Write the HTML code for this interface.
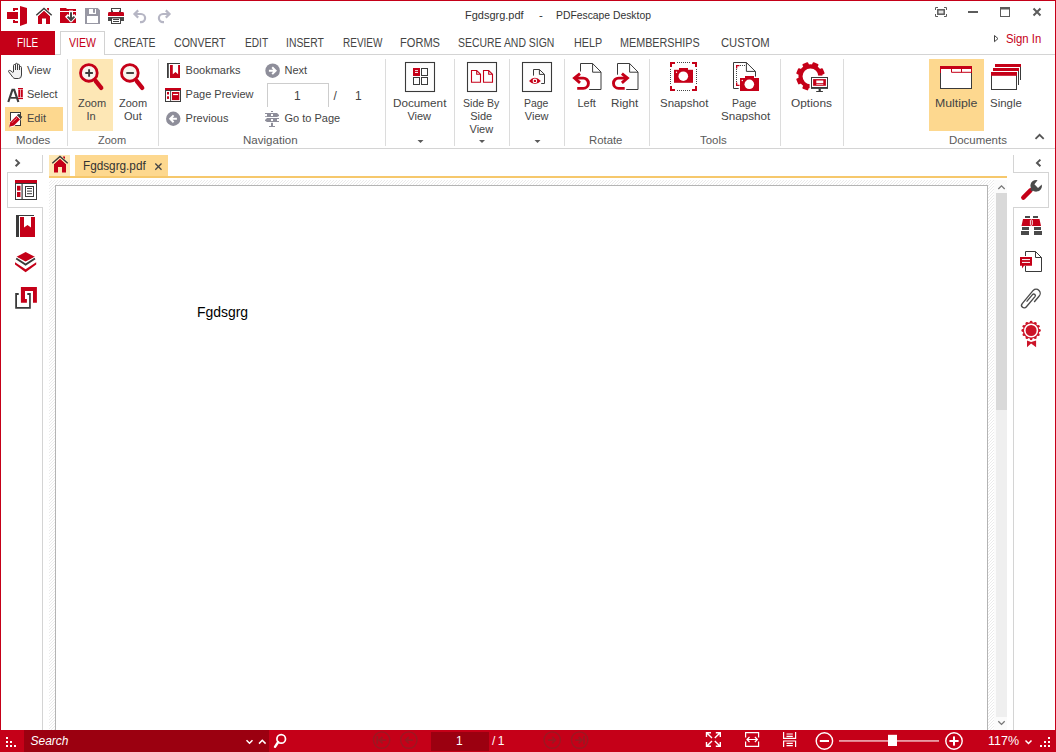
<!DOCTYPE html>
<html><head><meta charset="utf-8">
<style>
*{margin:0;padding:0;box-sizing:border-box}
html,body{width:1056px;height:752px;overflow:hidden;background:#fff}
body{position:relative;font-family:"Liberation Sans",sans-serif;color:#444}
.a{position:absolute}
.t{position:absolute;white-space:nowrap;line-height:1;font-size:11px;color:#444;transform-origin:0 0}
.tb{font-size:12.5px;color:#444}
.gl{color:#5a5a5a}
.vl{position:absolute;width:1px;background:#dcdcdc}
.hl{position:absolute;height:1px;background:#d4d4d4}
svg{position:absolute;overflow:visible}
</style></head><body>
<!-- window border -->
<div class="a" style="left:0;top:0;width:1056px;height:1px;background:#c50018"></div>
<div class="a" style="left:0;top:0;width:1px;height:730px;background:#c50018"></div>
<div class="a" style="left:1055px;top:0;width:1px;height:730px;background:#c50018"></div>

<!-- title -->
<div class="t" style="left:465px;top:9.8px;font-size:11.5px;color:#333;transform:scaleX(0.955)">Fgdsgrg.pdf</div>
<div class="t" style="left:539px;top:9.8px;font-size:11.5px;color:#333">-</div>
<div class="t" style="left:556px;top:9.8px;font-size:11.5px;color:#333;transform:scaleX(0.9)">PDFescape Desktop</div>

<!-- tab row -->
<div class="hl" style="left:55px;top:54px;width:1000px;background:#d4d4d4"></div>
<div class="a" style="left:1px;top:31px;width:54px;height:24px;background:#c50018"></div>
<div class="a" style="left:60px;top:31px;width:45px;height:24px;border:1px solid #d2d2d2;border-bottom:none;background:#fff"></div>
<div class="t tb" style="left:16.5px;top:37px;color:#fff;transform:scaleX(0.8)">FILE</div>
<div class="t tb" style="left:69px;top:37px;color:#c50018;transform:scaleX(0.84)">VIEW</div>
<div class="t tb" style="left:114px;top:37px;transform:scaleX(0.835)">CREATE</div>
<div class="t tb" style="left:174px;top:37px;transform:scaleX(0.846)">CONVERT</div>
<div class="t tb" style="left:244.5px;top:37px;transform:scaleX(0.81)">EDIT</div>
<div class="t tb" style="left:285.8px;top:37px;transform:scaleX(0.83)">INSERT</div>
<div class="t tb" style="left:342.6px;top:37px;transform:scaleX(0.80)">REVIEW</div>
<div class="t tb" style="left:400.3px;top:37px;transform:scaleX(0.886)">FORMS</div>
<div class="t tb" style="left:458px;top:37px;transform:scaleX(0.836)">SECURE AND SIGN</div>
<div class="t tb" style="left:573.7px;top:37px;transform:scaleX(0.86)">HELP</div>
<div class="t tb" style="left:619.5px;top:37px;transform:scaleX(0.863)">MEMBERSHIPS</div>
<div class="t tb" style="left:721.4px;top:37px;transform:scaleX(0.90)">CUSTOM</div>
<div class="t" style="left:1006px;top:31.8px;font-size:13px;color:#c50018;transform:scaleX(0.87)">Sign In</div>

<!-- ribbon -->
<div class="hl" style="left:1px;top:148px;width:1054px;background:#d4d4d4"></div>
<div class="a" style="left:5px;top:107px;width:58px;height:24px;background:#fdd88f"></div>
<div class="a" style="left:72px;top:59px;width:41px;height:72px;background:#fde7b5"></div>
<div class="a" style="left:929px;top:59px;width:55px;height:72px;background:#fdd88f"></div>
<div class="vl" style="left:67px;top:59px;height:87px"></div>
<div class="vl" style="left:158px;top:59px;height:87px"></div>
<div class="vl" style="left:385px;top:59px;height:87px"></div>
<div class="vl" style="left:454px;top:59px;height:87px"></div>
<div class="vl" style="left:509px;top:59px;height:87px"></div>
<div class="vl" style="left:564px;top:59px;height:87px"></div>
<div class="vl" style="left:649px;top:59px;height:87px"></div>
<div class="vl" style="left:780px;top:59px;height:87px"></div>
<div class="vl" style="left:843px;top:59px;height:87px"></div>

<!-- ribbon texts -->
<div class="t" style="left:27px;top:64.5px">View</div>
<div class="t" style="left:27px;top:88.7px">Select</div>
<div class="t" style="left:27px;top:112.5px">Edit</div>
<div class="t gl" style="left:15.8px;top:134.8px;transform:scaleX(1.04)">Modes</div>
<div class="t" style="left:78px;top:97.8px">Zoom</div>
<div class="t" style="left:86.5px;top:110.8px">In</div>
<div class="t" style="left:119px;top:97.8px">Zoom</div>
<div class="t" style="left:124px;top:110.8px">Out</div>
<div class="t gl" style="left:98px;top:134.8px">Zoom</div>
<div class="t" style="left:185.6px;top:64.5px">Bookmarks</div>
<div class="t" style="left:185.6px;top:88.7px">Page Preview</div>
<div class="t" style="left:185.6px;top:112.5px">Previous</div>
<div class="t" style="left:284.5px;top:64.5px">Next</div>
<div class="t" style="left:284.5px;top:112.7px">Go to Page</div>
<div class="t gl" style="left:243px;top:134.8px;transform:scaleX(1.05)">Navigation</div>
<div class="a" style="left:267px;top:83px;width:62px;height:24px;border:1px solid #cdcdcd;border-bottom:none"></div>
<div class="t" style="left:294px;top:90px;font-size:12px">1</div>
<div class="t" style="left:333.5px;top:90px;font-size:12px">/</div>
<div class="t" style="left:355px;top:90px;font-size:12px">1</div>
<div class="t" style="left:392.6px;top:97.8px;transform:scaleX(1.065)">Document</div>
<div class="t" style="left:407.4px;top:110.8px">View</div>
<div class="t" style="left:463.4px;top:97.8px;transform:scaleX(0.96)">Side By</div>
<div class="t" style="left:470.2px;top:110.8px">Side</div>
<div class="t" style="left:469.5px;top:124px">View</div>
<div class="t" style="left:524px;top:97.8px;transform:scaleX(0.95)">Page</div>
<div class="t" style="left:524.8px;top:110.8px">View</div>
<div class="t" style="left:577.5px;top:97.8px">Left</div>
<div class="t" style="left:611.2px;top:97.8px;transform:scaleX(1.06)">Right</div>
<div class="t gl" style="left:589px;top:134.8px;transform:scaleX(1.03)">Rotate</div>
<div class="t" style="left:660.3px;top:97.8px;transform:scaleX(1.04)">Snapshot</div>
<div class="t" style="left:732.3px;top:97.8px;transform:scaleX(0.95)">Page</div>
<div class="t" style="left:720.6px;top:110.8px;transform:scaleX(1.06)">Snapshot</div>
<div class="t gl" style="left:700px;top:134.8px;transform:scaleX(1.04)">Tools</div>
<div class="t" style="left:790.7px;top:97.8px;transform:scaleX(1.08)">Options</div>
<div class="t" style="left:935.3px;top:97.8px;transform:scaleX(1.12)">Multiple</div>
<div class="t" style="left:989.8px;top:97.8px;transform:scaleX(1.04)">Single</div>
<div class="t gl" style="left:949px;top:134.8px;transform:scaleX(1.04)">Documents</div>

<!-- sidebars -->
<div class="vl" style="left:42px;top:155px;height:18px;background:#d4d4d4"></div>
<div class="hl" style="left:7px;top:172px;width:36px"></div>
<div class="vl" style="left:7px;top:172px;height:36px;background:#d4d4d4"></div>
<div class="hl" style="left:7px;top:207px;width:36px"></div>
<div class="vl" style="left:42px;top:207px;height:523px;background:#d4d4d4"></div>

<div class="vl" style="left:1013px;top:155px;height:18px;background:#d4d4d4"></div>
<div class="hl" style="left:1013px;top:172px;width:36px"></div>
<div class="vl" style="left:1048px;top:172px;height:36px;background:#d4d4d4"></div>
<div class="hl" style="left:1013px;top:207px;width:36px"></div>
<div class="vl" style="left:1013px;top:207px;height:523px;background:#d4d4d4"></div>

<!-- doc tabs -->
<div class="a" style="left:49px;top:155px;width:21px;height:22px;background:#fde7b5"></div>
<div class="a" style="left:75px;top:155px;width:93px;height:22px;background:#fdd88f"></div>
<div class="a" style="left:49px;top:176px;width:958px;height:2px;background:#f6c86c"></div>
<div class="t" style="left:83.3px;top:160.2px;font-size:12.5px;color:#333;transform:scaleX(0.94)">Fgdsgrg.pdf</div>

<!-- document area -->
<svg width="0" height="0"><defs>
<pattern id="hatch" width="3" height="3" patternUnits="userSpaceOnUse" patternTransform="rotate(45)">
<rect width="3" height="3" fill="#fff"/><rect width="1" height="3" fill="#e6e6e6"/></pattern></defs></svg>
<div class="a" style="left:49px;top:180px;width:946px;height:550px;background:repeating-linear-gradient(135deg,#ebebeb 0px,#ebebeb 0.7px,#fff 0.7px,#fff 2.121px)"></div>
<div class="a" style="left:55px;top:185px;width:933px;height:560px;background:#fff;border:1px solid #b4b4b4"></div>
<div class="t" style="left:196.8px;top:304.6px;font-size:14px;color:#000;transform:scaleX(0.995)">Fgdsgrg</div>

<!-- scrollbar -->
<div class="a" style="left:994px;top:180px;width:13px;height:550px;background:#fbfbfb"></div>
<div class="a" style="left:996px;top:193px;width:11px;height:217px;background:#d9d9d9"></div>
<div class="a" style="left:996px;top:410px;width:11px;height:307px;background:#efefef"></div>

<!-- status bar -->
<div class="a" style="left:0;top:730px;width:1056px;height:22px;background:#c50018"></div>
<div class="a" style="left:24px;top:730px;width:245px;height:22px;background:#9b0010"></div>
<div class="a" style="left:431px;top:732px;width:58px;height:19px;background:#9b0010"></div>
<div class="t" style="left:30.5px;top:734.7px;font-size:12px;font-style:italic;color:#fff">Search</div>
<div class="t" style="left:456px;top:734.8px;font-size:12px;color:#fff">1</div>
<div class="t" style="left:492px;top:734.8px;font-size:12px;color:#fff;letter-spacing:2.5px">/1</div>
<div class="t" style="left:987.5px;top:734.6px;font-size:12px;color:#fff;transform:scaleX(1.04)">117%</div>


<svg class="a" style="left:0;top:0" width="1056" height="752" viewBox="0 0 1056 752" shape-rendering="geometricPrecision">
<!-- ===== title bar ===== -->
<g fill="#c50018">
<rect x="7" y="12" width="11" height="7"/>
<rect x="13" y="8" width="5" height="2"/><rect x="13" y="8" width="2" height="3"/>
<rect x="13" y="21" width="5" height="2"/><rect x="13" y="20" width="2" height="3"/>
<path d="M20 6L27 8V23.5L20 26Z"/>
</g>
<!-- home -->
<path d="M38 16L44 10.6L50 16V24H46V18.6H42V24H38Z" fill="#c50018"/>
<path d="M47 8H49V11L47 10Z" fill="#c50018"/>
<path d="M36.3 15.6L44 8.6L51.7 15.6" fill="none" stroke="#fff" stroke-width="3"/>
<path d="M36.3 15.3L44 8.4L51.7 15.3" fill="none" stroke="#3a3a3a" stroke-width="1.4"/>
<!-- folder -->
<path d="M60 8H66L67 9H76V11H60Z" fill="#c50018"/>
<rect x="60" y="12" width="16" height="11" fill="#c50018"/>
<path d="M71 12.5V19.5M67.8 16.8L71 20L74.2 16.8" fill="none" stroke="#fff" stroke-width="4" stroke-linecap="square"/>
<path d="M71 12.3V19.5M67.6 16.6L71 20L74.4 16.6" fill="none" stroke="#454545" stroke-width="2"/>
<!-- save -->
<path d="M85 8H97.7L100 10.2V24H85Z" fill="#9898a4"/>
<rect x="89" y="9" width="7" height="5" fill="#fff"/><rect x="93" y="9" width="2" height="3.8" fill="#9898a4"/>
<rect x="87" y="16" width="11" height="7" fill="#fff"/>
<!-- printer -->
<rect x="111.5" y="8.5" width="9" height="4.5" fill="#fff" stroke="#444" stroke-width="1"/>
<path d="M108 13.2Q108 12 109.5 12H122.5Q124 12 124 13.2V16H108Z" fill="#c50018"/>
<rect x="108" y="17" width="16" height="4" fill="#4a4a4a"/>
<rect x="111.5" y="18" width="9" height="5.5" fill="#fff" stroke="#444" stroke-width="1"/>
<rect x="113" y="19" width="6" height="1" fill="#444"/><rect x="113" y="21" width="6" height="1" fill="#444"/><rect x="111" y="10.5" width="2" height="1.6" fill="#444"/><rect x="119" y="10.5" width="2" height="1.6" fill="#444"/>
<!-- undo / redo -->
<g fill="none" stroke="#b6b6c4" stroke-width="2.2">
<path d="M138.2 10.4L134.5 14L138.2 17.6"/><path d="M135 14H141A4.1 4.1 0 0 1 141 22.2H140"/>
<path d="M165.8 10.4L169.5 14L165.8 17.6"/><path d="M169 14H163A4.1 4.1 0 0 0 163 22.2H164"/>
</g>
<!-- window controls -->
<g fill="none" stroke="#5c5c5c" stroke-width="1">
<path d="M935.5 10V7.5H938M944 7.5H946.5V10M946.5 14V16.5H944M938 16.5H935.5V14"/>
<rect x="937.8" y="9.8" width="6.4" height="4.4" fill="#e4e4e4" stroke-width="1.5"/>
<rect x="1000.5" y="7.5" width="9" height="9"/>
</g>
<rect x="968" y="11" width="10" height="2" fill="#5c5c5c"/>
<rect x="1000" y="7" width="10" height="2.5" fill="#5c5c5c"/>
<path d="M1033.5 8.5L1040.5 15.5M1040.5 8.5L1033.5 15.5" stroke="#5c5c5c" stroke-width="2"/>
<!-- sign in triangle -->
<path d="M994.5 35.5L998 38.6L994.5 41.7Z" fill="none" stroke="#444" stroke-width="1"/>

<!-- ===== ribbon ===== -->
<!-- hand -->
<path d="M13.5 72V65.5Q13.5 64.5 14.5 64.5Q15.5 64.5 15.5 65.5V64.2Q15.5 63.3 16.5 63.3Q17.5 63.3 17.5 64.2V64.8Q17.5 64.3 18.5 64.3Q19.5 64.3 19.5 65.3V67.2Q19.7 66.5 20.5 66.5Q21.5 66.5 21.5 67.5V75Q21.5 78.5 18.5 78.5H15Q13.8 78.5 12.8 77.2L8.5 71.5Q8.3 70.4 9.6 70.4Q10.8 70.4 12.4 72.2Q13 72.9 13.5 72Z" fill="#f2f2f2" stroke="#3c3c3c" stroke-width="1"/>
<path d="M15.5 65V70M17.5 64.5V70M19.5 65.5V70" stroke="#3c3c3c" stroke-width="1" fill="none"/>
<!-- select A -->
<path d="M8.3 102L12.4 89.8H14.2L18.4 102" fill="none" stroke="#3c3c3c" stroke-width="2.1"/>
<rect x="10.5" y="97" width="5.8" height="1.7" fill="#3c3c3c"/>
<g fill="#c50018"><rect x="18" y="88" width="5" height="1.2"/><rect x="18" y="97.8" width="5" height="1.3"/>
<rect x="18.3" y="89.6" width="1.9" height="7.6"/><rect x="20.8" y="89.6" width="2" height="7.6"/></g>
<!-- edit -->
<rect x="10.5" y="112.5" width="10" height="13" fill="#fff" stroke="#3a3a3a" stroke-width="1"/>
<path d="M16.2 115.2L20.8 119.8L14 126.6L9.6 127.4L9.6 121.8Z" fill="#fff"/>
<path d="M16.5 116L20 119.5L14 125.6L9.2 126.8L10.3 122.2Z" fill="#c50018"/>
<path d="M12.4 122.4L16.8 118" stroke="#fff" stroke-width="0.9" stroke-dasharray="0.9 0.9"/>
<path d="M17.3 115.1L19 114.2L21.8 116.9L20.6 118.4Z" fill="#3a3a3a" stroke="#3a3a3a" stroke-width="0.8"/>
<path d="M8.9 126.5L9.4 127.2L10 127.6" stroke="#fdd88f" stroke-width="0.1"/>
<!-- zoom in / out -->
<g fill="#f8f5ef" stroke="#c50018" stroke-width="2.8">
<circle cx="88.85" cy="72.9" r="8.35"/><circle cx="129.85" cy="72.9" r="8.35"/></g>
<g stroke="#c50018" stroke-width="4.4" stroke-linecap="round">
<path d="M95.8 81.2L101.2 87.8"/><path d="M136.8 81.2L142.2 87.8"/></g>
<path d="M85.3 73H92.9M89.1 69.3V76.7" stroke="#3c3c3c" stroke-width="1.9"/>
<path d="M126.3 73H133.9" stroke="#3c3c3c" stroke-width="1.9"/>
<!-- bookmarks -->
<rect x="167" y="63" width="13" height="1" fill="#3c3c3c"/><rect x="167" y="63" width="1.8" height="15" fill="#3c3c3c"/>
<path d="M170 65H180V78H170Z" fill="#c50018"/>
<path d="M172.8 65H178.1V74.3L175.5 72L172.8 74.3Z" fill="#fff"/>
<!-- page preview -->
<rect x="165" y="88" width="16" height="3" fill="#c50018"/>
<rect x="165.5" y="90.5" width="15" height="11" fill="#fff" stroke="#3c3c3c" stroke-width="1"/>
<rect x="170.2" y="91" width="0.9" height="10.5" fill="#3c3c3c"/>
<rect x="167" y="92" width="2" height="2.5" fill="#c50018"/><rect x="167" y="96.3" width="2" height="2.6" fill="#c50018"/>
<rect x="172" y="92" width="7.3" height="8.1" fill="#c50018"/><rect x="173.1" y="93.9" width="5" height="1.2" fill="#fff"/>
<!-- previous / next -->
<circle cx="173.25" cy="118.75" r="7.2" fill="#8e8e9a"/>
<path d="M176.9 118.8H170.2M173.6 115.4L170.2 118.8L173.6 122.2" fill="none" stroke="#fff" stroke-width="2"/>
<circle cx="272.6" cy="70.7" r="7.3" fill="#8e8e9a"/>
<path d="M268.9 70.7H275.6M272.2 67.3L275.6 70.7L272.2 74.1" fill="none" stroke="#fff" stroke-width="2"/>
<!-- go to page -->
<g fill="#8e8e9a">
<rect x="271" y="111" width="2" height="1"/>
<path d="M265 113H277L279 115V116L277 117H265V116.2H267V114H265Z"/>
<path d="M279 118H267L265 120V120.8L267 122H279V121H277V119H279Z"/>
<rect x="271" y="122.8" width="2" height="3.5"/><rect x="269" y="126" width="6" height="1"/>
</g>
<rect x="271" y="114" width="2" height="2" fill="#fff"/><rect x="271" y="119" width="2" height="2" fill="#fff"/>
<!-- dropdown arrows -->
<g fill="#5a5a5a"><path d="M417.5 140H423.5L420.5 143Z"/><path d="M479 140H485L482 143Z"/><path d="M534.5 140H540.5L537.5 143Z"/></g>
<!-- document view -->
<g fill="#fdfdfd" stroke="#3a3a3a" stroke-width="1.1">
<rect x="405.5" y="62.5" width="29" height="29"/><rect x="467.5" y="62.5" width="29" height="29"/><rect x="522.5" y="62.5" width="29" height="29"/></g>
<rect x="413" y="68" width="7" height="8" fill="#c50018"/>
<rect x="415" y="70.2" width="3" height="0.9" fill="#fff"/><rect x="415" y="72" width="3" height="0.9" fill="#fff"/>
<g fill="none" stroke="#3a3a3a" stroke-width="1">
<rect x="421.5" y="68.5" width="6" height="7"/><rect x="413.5" y="77.5" width="6" height="7"/><rect x="421.5" y="77.5" width="6" height="7"/></g>
<!-- side by side -->
<g fill="none" stroke="#c50018" stroke-width="1.1">
<path d="M471.5 70.5H476.7L480.5 74.2V82.3H471.5Z M476.7 70.5V74.2H480.5"/>
<path d="M483.5 70.5H488.7L492.5 74.2V82.3H483.5Z M488.7 70.5V74.2H492.5"/></g>
<!-- page view -->
<path d="M533.5 75.6V69.5H539.4L544.5 74.4V83.5H541.2 M539.4 69.5V74.4H544.5" fill="none" stroke="#3a3a3a" stroke-width="1"/>
<path d="M529 80.9Q534.9 74.6 540.8 80.9Q534.9 87.2 529 80.9Z" fill="#c50018"/>
<circle cx="534.9" cy="80.9" r="2.3" fill="#fff"/><circle cx="534.9" cy="80.9" r="1.2" fill="#c50018"/>
<!-- rotate left / right -->
<g fill="none" stroke="#3a3a3a" stroke-width="1">
<path d="M580.5 71.5V63.5H592.6L601 72V89.5H589.2 M592.6 63.5V72.2H601"/>
<path d="M617.5 74.7V63.5H629.6L638 72V89.5H626.2 M629.6 63.5V72.2H638"/></g>
<g fill="none" stroke="#c50018" stroke-width="2.9">
<path d="M580 73.6L574.5 78.1L580 82.8"/><path d="M575 78.1H583.3A5.1 5.1 0 0 1 583.3 88.35H577.2"/>
<path d="M621.9 73.6L627.4 78.1L621.9 82.8"/><path d="M626.9 78.1H618.6A5.1 5.1 0 0 0 618.6 88.35H624.7"/></g>
<!-- snapshot -->
<g fill="#c50018">
<path d="M670 62H675V64H672V67H670Z"/><path d="M697 62H692V64H695V67H697Z"/>
<path d="M670 91H675V89H672V86H670Z"/><path d="M697 91H692V89H695V86H697Z"/>
<rect x="674" y="69.8" width="19" height="13"/><rect x="679" y="68" width="9" height="2"/>
</g>
<g fill="none" stroke="#444" stroke-width="1" stroke-dasharray="1 1">
<path d="M677 62.5H690.5M677 90.5H690.5M670.5 69V84.5M696.5 69V84.5"/></g>
<circle cx="683.3" cy="76.2" r="4.8" fill="#fff"/><circle cx="676.5" cy="72.3" r="0.7" fill="#fff"/>
<!-- page snapshot -->
<path d="M738.7 88.5H733.5V62.5H746.4L755.5 71.5V76.6 M746.4 62.5V71.4H755.5" fill="none" stroke="#3a3a3a" stroke-width="1"/>
<g fill="#c50018"><path d="M736 65H739.5V66.3H737.3V68.5H736Z"/><path d="M736 86H739.5V84.7H737.3V82.5H736Z"/>
<rect x="740" y="78" width="19" height="13"/><rect x="745" y="76" width="9" height="2"/></g>
<path d="M740 65.5H745.5M736.5 69V82.5" fill="none" stroke="#444" stroke-width="1" stroke-dasharray="1 1"/>
<circle cx="749.3" cy="84.3" r="4.8" fill="#fff"/><circle cx="742.3" cy="80.5" r="0.7" fill="#fff"/>
<!-- options gear -->
<defs><rect id="tooth" x="-3.1" y="-14.3" width="6.2" height="4.5" rx="0.9"/></defs>
<g transform="translate(810.45 76.3)" fill="#c50018">
<circle r="9.95" fill="none" stroke="#c50018" stroke-width="4.1"/>
<use href="#tooth" transform="rotate(22.5)"/><use href="#tooth" transform="rotate(67.5)"/><use href="#tooth" transform="rotate(112.5)"/><use href="#tooth" transform="rotate(157.5)"/>
<use href="#tooth" transform="rotate(202.5)"/><use href="#tooth" transform="rotate(247.5)"/><use href="#tooth" transform="rotate(292.5)"/><use href="#tooth" transform="rotate(337.5)"/>
</g>
<rect x="809.6" y="75.6" width="20" height="17.5" fill="#fff"/>
<rect x="811.5" y="77.5" width="16" height="10.5" fill="#fff" stroke="#3a3a3a" stroke-width="1"/>
<rect x="811" y="87" width="17" height="1.8" fill="#3a3a3a"/>
<rect x="813.1" y="79.1" width="12.8" height="6.7" fill="#c50018"/>
<rect x="816.3" y="80.5" width="7" height="2.5" fill="#fff"/><rect x="816.3" y="83.8" width="7" height="0.8" fill="#fff"/>
<rect x="818.6" y="88.7" width="2.2" height="2.4" fill="#3a3a3a"/><rect x="816.2" y="91" width="6.7" height="1" fill="#3a3a3a"/>
<!-- multiple -->
<rect x="940.5" y="66.5" width="31" height="22" fill="#fff" stroke="#3a3a3a" stroke-width="1"/>
<rect x="940" y="66" width="32" height="3" fill="#c50018"/>
<rect x="940" y="66" width="1" height="7" fill="#c50018"/><rect x="971" y="66" width="1" height="7" fill="#c50018"/>
<path d="M951.5 68.5V72.3H971.5M961.5 68.5V72.3" fill="none" stroke="#c50018" stroke-width="1"/>
<!-- single -->
<rect x="1020" y="66" width="1" height="14" fill="#3a3a3a"/><rect x="995" y="64" width="26" height="3" fill="#c50018"/>
<rect x="1018" y="70" width="1" height="15" fill="#3a3a3a"/><rect x="993" y="68" width="26" height="3" fill="#c50018"/>
<rect x="991.5" y="72.5" width="25" height="17" fill="#fff" stroke="#3a3a3a" stroke-width="1"/>
<rect x="991" y="72" width="26" height="3.8" fill="#c50018"/>
<!-- collapse caret -->
<path d="M1035.5 138.8L1039.6 134.8L1043.7 138.8" fill="none" stroke="#555" stroke-width="1.8"/>

<!-- ===== sidebars ===== -->
<path d="M15.6 159.6L19 162.9L15.6 166.2" fill="none" stroke="#555" stroke-width="2"/>
<path d="M1040.4 159.6L1037 162.9L1040.4 166.2" fill="none" stroke="#555" stroke-width="2"/>
<!-- page preview big -->
<rect x="15" y="180" width="22" height="4" fill="#c50018"/>
<rect x="15.5" y="183.5" width="21" height="16" fill="#fff" stroke="#3a3a3a" stroke-width="1"/>
<rect x="21.5" y="184" width="1.2" height="16" fill="#3a3a3a"/>
<rect x="17" y="185.8" width="3.5" height="4.8" fill="#c50018"/><rect x="17" y="192" width="3.5" height="5" fill="#c50018"/>
<rect x="25.5" y="186.5" width="8" height="10" fill="#fff" stroke="#3a3a3a" stroke-width="1"/>
<rect x="27" y="188" width="5" height="1" fill="#3a3a3a"/><rect x="27" y="190.6" width="5" height="1" fill="#3a3a3a"/><rect x="27" y="193.2" width="5" height="1" fill="#3a3a3a"/>
<!-- bookmark big -->
<rect x="16" y="215" width="18" height="1" fill="#3a3a3a"/><rect x="16" y="215" width="3" height="22" fill="#3a3a3a"/>
<rect x="20" y="217" width="15" height="20" fill="#c50018"/>
<path d="M24 217H31V227.5L27.5 225L24 227.5Z" fill="#fff"/>
<!-- layers -->
<path d="M25.6 252L34.8 256.8L25.6 261.6L16.6 256.8Z" fill="#c50018"/>
<path d="M16.2 258.6L25.6 264.6L35 258.6" fill="none" stroke="#fff" stroke-width="3.2"/>
<path d="M16.2 258.6L25.6 264.6L35 258.6" fill="none" stroke="#3a3a3a" stroke-width="1.8"/>
<path d="M15 262.8L25.6 269.6L36.2 262.8" fill="none" stroke="#fff" stroke-width="3.4"/>
<path d="M15 262.2L25.6 269.2L36.2 262.2V264.6L25.6 272.2L15 264.6Z" fill="#c50018"/>
<!-- links -->
<path d="M20.9 287H36.9V302.8H33V290.9H25V298.9H26.9V302.8H20.9Z" fill="#c50018"/>
<path d="M15.2 293.1H18.7V295H17V306.9H29.1V295H27.3V293.1H30.8V308.8H15.2Z" fill="#3a3a3a"/>
<!-- right: wrench -->
<path d="M1023.3 197.6L1030.5 190.4" stroke="#c50018" stroke-width="4.4" stroke-linecap="round"/>
<path d="M1037.6 180.2A5.8 5.8 0 1 0 1041.8 184.4L1038 188L1034.4 184.2Z" fill="#4a4a4a"/>
<path d="M1031 190.5L1033.2 188.3" stroke="#4a4a4a" stroke-width="2.5"/>
<!-- binoculars -->
<g fill="#4a4a4a">
<rect x="1025" y="216" width="5" height="2"/><rect x="1033" y="216" width="5" height="2"/>
<rect x="1022" y="227" width="7" height="3"/><rect x="1034" y="227" width="7" height="3"/>
<rect x="1021" y="231" width="8" height="4"/><rect x="1034" y="231" width="8" height="4"/></g>
<path d="M1023 219H1039.5L1041 226H1021.5Z" fill="#c50018"/>
<rect x="1030.4" y="219.8" width="1.9" height="5.6" rx="0.8" fill="none" stroke="#fff" stroke-width="0.9"/>
<!-- comments -->
<path d="M1025.5 256V251.5H1035.5L1041.5 257.5V271.5H1025.5V266" fill="#fff" stroke="#3a3a3a" stroke-width="1"/>
<path d="M1035.5 251.5V257.5H1041.5" fill="none" stroke="#3a3a3a" stroke-width="1"/>
<path d="M1020 257H1032V265.8H1024L1022 268.5V265.8H1020Z" fill="#c50018"/>
<path d="M1022 259.6H1030M1022 262.4H1030" stroke="#fff" stroke-width="1"/>
<!-- paperclip -->
<path d="M1034.2 302L1039 296.2A4.1 4.1 0 0 0 1033.2 290.4L1022.2 303.6A2.6 2.6 0 0 0 1026.2 307L1035 296.6A1.6 1.6 0 0 0 1032.5 294.6L1026.6 301.6" fill="none" stroke="#4a4a4a" stroke-width="1.35"/>
<!-- seal -->
<g transform="translate(1031.1 330.5)" fill="#cc1428">
<circle r="8.3"/>
<g id="bumps">
<circle cx="0" cy="-8.3" r="1.4"/><circle cx="4.15" cy="-7.19" r="1.4"/><circle cx="7.19" cy="-4.15" r="1.4"/><circle cx="8.3" cy="0" r="1.4"/>
<circle cx="7.19" cy="4.15" r="1.4"/><circle cx="4.15" cy="7.19" r="1.4"/><circle cx="0" cy="8.3" r="1.4"/><circle cx="-4.15" cy="7.19" r="1.4"/>
<circle cx="-7.19" cy="4.15" r="1.4"/><circle cx="-8.3" cy="0" r="1.4"/><circle cx="-7.19" cy="-4.15" r="1.4"/><circle cx="-4.15" cy="-7.19" r="1.4"/>
</g>
<circle r="6.3" fill="none" stroke="#fff" stroke-width="1.6"/>
</g>
<path d="M1027 340.4L1031.1 342L1036.1 340.4V347.2L1031.1 343.6L1027 347.2Z" fill="#cc1428"/>
<!-- tab home -->
<path d="M54 164L60 158.6L66 164V172.5H62V167H58V172.5H54Z" fill="#c50018"/>
<path d="M63 156.5H65V159.5L63 158.5Z" fill="#c50018"/>
<path d="M52.3 163.6L60 156.6L67.7 163.6" fill="none" stroke="#fde7b5" stroke-width="3"/>
<path d="M52.3 163.3L60 156.4L67.7 163.3" fill="none" stroke="#3a3a3a" stroke-width="1.4"/>
<!-- tab close x -->
<path d="M155.3 163.5L161.5 169.7M161.5 163.5L155.3 169.7" stroke="#444" stroke-width="1.3"/>
<!-- scroll chevrons -->
<path d="M998.3 189L1001.5 185.8L1004.7 189" fill="none" stroke="#777" stroke-width="1.3"/>
<path d="M998.3 721.2L1001.5 724.4L1004.7 721.2" fill="none" stroke="#777" stroke-width="1.3"/>

<!-- ===== status bar ===== -->
<g fill="#fff">
<rect x="6" y="737" width="2" height="2"/><rect x="6" y="741" width="2" height="2"/><rect x="10" y="741" width="2" height="2"/>
<rect x="6" y="745" width="2" height="2"/><rect x="10" y="745" width="2" height="2"/><rect x="14" y="745" width="2" height="2"/>
<rect x="1048" y="737" width="2" height="2"/><rect x="1044" y="741" width="2" height="2"/><rect x="1048" y="741" width="2" height="2"/>
<rect x="1040" y="745" width="2" height="2"/><rect x="1044" y="745" width="2" height="2"/><rect x="1048" y="745" width="2" height="2"/>
</g>
<g fill="none" stroke="#fff" stroke-width="1.5">
<path d="M246.5 740.2L249.5 743.2L252.5 740.2"/><path d="M259 743.6L262.3 740.3L265.6 743.6"/>
<path d="M1025.5 740.5L1028.5 743.5L1031.5 740.5"/>
</g>
<circle cx="281.2" cy="738.9" r="4.3" fill="none" stroke="#fff" stroke-width="1.7"/>
<path d="M278.2 742L275 746.8" stroke="#fff" stroke-width="2.4" stroke-linecap="round"/>
<!-- nav circles (disabled) -->
<g fill="none" stroke="#9a1822" stroke-width="1.4">
<circle cx="381.6" cy="740.1" r="8.2"/><circle cx="408.8" cy="740.1" r="8.2"/>
<circle cx="552.2" cy="740.1" r="8.2"/><circle cx="579.6" cy="740.1" r="8.2"/>
</g>
<g fill="none" stroke="#9a1822" stroke-width="1.8">
<path d="M377.3 736V744.2M386.2 740.1H379.4M382.6 736.8L379.4 740.1L382.6 743.4"/>
<path d="M413 740.1H405.6M408.8 736.8L405.6 740.1L408.8 743.4"/>
<path d="M548 740.1H555.4M552.2 736.8L555.4 740.1L552.2 743.4"/>
<path d="M584 736V744.2M575 740.1H581.8M578.6 736.8L581.8 740.1L578.6 743.4"/>
</g>
<!-- fullscreen arrows -->
<g fill="none" stroke="#fff" stroke-width="1.4">
<path d="M706.5 737V732.7H711M706.9 733L712 738"/>
<path d="M720.3 737V732.7H715.8M719.9 733L714.8 738"/>
<path d="M706.5 742V746.3H711M706.9 746L712 741"/>
<path d="M720.3 742V746.3H715.8M719.9 746L714.8 741"/>
</g>
<g fill="none" stroke="#fff" stroke-width="1.2">
<path d="M745.6 737.5V732.6H758.6V737.5"/><path d="M745.6 741.5V746.4H758.6V741.5"/>
<path d="M747 739.5H757.4M749.5 737L747 739.5L749.5 742M754.9 737L757.4 739.5L754.9 742"/>
<path d="M783.6 732V738.4H795.6V732M786.5 734H792.8M786.5 736.3H792.8"/>
<path d="M783.6 747V741H795.6V747M786.5 743.4H792.8M786.5 745.7H792.8"/>
</g>
<!-- zoom slider -->
<circle cx="824.4" cy="741" r="8.2" fill="none" stroke="#fff" stroke-width="1.4"/>
<rect x="819.8" y="740" width="9.2" height="2" fill="#fff"/>
<rect x="839" y="740.4" width="100" height="1.1" fill="#fff"/>
<rect x="888" y="734.8" width="9" height="11.2" fill="#fff"/>
<circle cx="954" cy="741" r="8.2" fill="none" stroke="#fff" stroke-width="1.4"/>
<rect x="949.4" y="740" width="9.2" height="2" fill="#fff"/><rect x="953" y="736.4" width="2" height="9.2" fill="#fff"/>
</svg>

</body></html>
